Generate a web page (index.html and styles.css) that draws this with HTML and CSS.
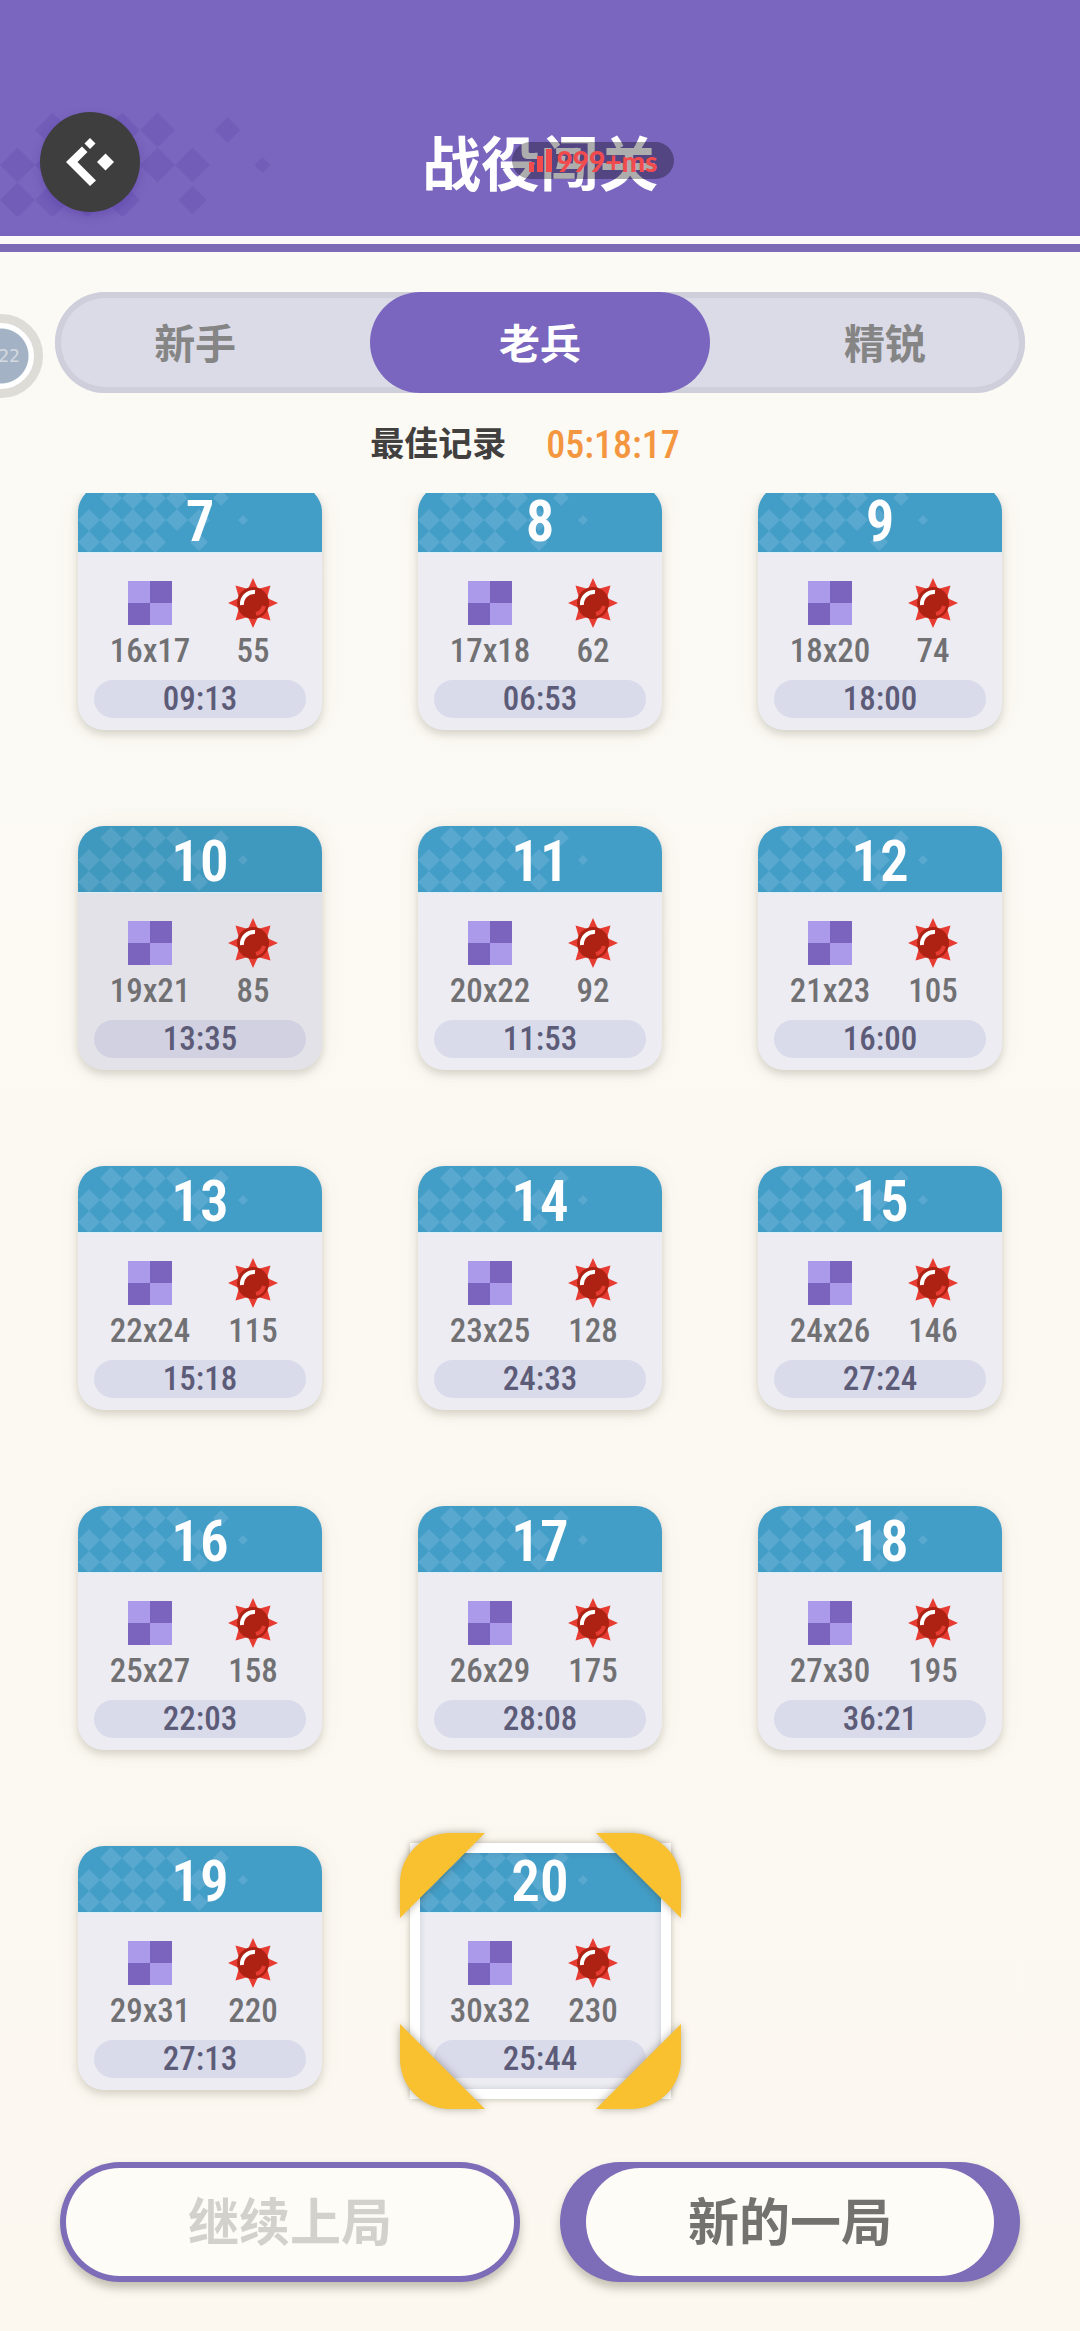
FILE: index.html
```html
<!DOCTYPE html>
<html lang="zh-CN">

<head>
    <meta charset="UTF-8">
    <meta name="viewport" content="width=device-width, initial-scale=1.0">
    <title>战役闯关</title>
    <link rel="stylesheet" href="styles.css">
</head>

<body>
    <!-- shared shapes -->
    <svg class="symbols" aria-hidden="true">
        <symbol id="diamonds" viewBox="0 0 176 66">
            <path d="M33 1l11 11-11 11-11-11zM55 1l11 11-11 11-11-11zM77 1l11 11-11 11-11-11zM99 1l11 11-11 11-11-11zM143 4l8 8-8 8-8-8z" />
            <path d="M11 23l11 11-11 11-11-11zM33 23l11 11-11 11-11-11zM55 23l11 11-11 11-11-11zM77 23l11 11-11 11-11-11zM99 23l11 11-11 11-11-11zM121 23l11 11-11 11-11-11zM165 29l5 5-5 5-5-5z" />
            <path d="M11 45l11 11-11 11-11-11zM33 45l11 11-11 11-11-11zM55 45l11 11-11 11-11-11zM77 45l11 11-11 11-11-11zM121 47l9 9-9 9-9-9z" />
        </symbol>
        <symbol id="board" viewBox="0 0 44 44">
            <path fill="#ab9ae9" d="M0 0h44v44H0z" />
            <path fill="#7a64be" d="M22 0h22v22H22zM0 22h22v22H0z" />
        </symbol>
        <symbol id="mine" viewBox="-26 -26 52 52">
            <path fill="#e63c32" d="M0-25L5-14 17.500-17.500 14-5 25 0 14 5 17.500 17.500 5 14 0 25-5 14-17.500 17.500-14 5-25 0-14-5-17.500-17.500-5-14z" />
            <circle r="16" fill="#ad2212" />
            <path fill="none" stroke="#fff" stroke-width="4" d="M-11 2A12 12 0 0 1 2-11" />
            <path fill="none" stroke="#e63c32" stroke-width="4" d="M11 3A11 11 0 0 1 3 11" />
        </symbol>
    </svg>

    <header class="header">
        <svg class="header-pattern" aria-hidden="true"><use href="#diamonds" /></svg>
        <button class="back" aria-label="返回">
            <svg viewBox="0 0 50 50" aria-hidden="true">
                <path d="M17 9.500L22.500 15 12.500 25 31 43.500 25 49 1 25z" />
                <path d="M25 1l5.500 5.500L25 12l-5.500-5.500z" />
                <path d="M40.500 16.500l8.500 8.500-8.500 8.500-8.500-8.500z" />
            </svg>
        </button>
        <h1 class="title">战役闯关</h1>
        <div class="ping">
            <svg class="ping-bars" viewBox="0 0 24 24" aria-hidden="true">
                <path d="M0 13h5v10H0zM8 7h6v16H8zM17 0h6v23h-6z" />
            </svg>
            <span>999+ms</span>
        </div>
    </header>

    <div class="float-ball">22</div>

    <nav class="tabs">
        <button class="tab">新手</button>
        <button class="tab active">老兵</button>
        <button class="tab">精锐</button>
    </nav>

    <p class="record">
        <span class="record-label">最佳记录</span>
        <span class="record-time">05:18:17</span>
    </p>

    <main class="list">
        <div class="grid" id="grid"></div>
    </main>

    <footer class="actions">
        <button class="action" disabled><span>继续上局</span></button>
        <button class="action primary"><span>新的一局</span></button>
    </footer>

    <script src="script.js"></script>
</body>

</html>
```
FILE: script.js
```js
const levels = [
    [7, '16x17', 55, '09:13'],
    [8, '17x18', 62, '06:53'],
    [9, '18x20', 74, '18:00'],
    [10, '19x21', 85, '13:35', 'pressed'],
    [11, '20x22', 92, '11:53'],
    [12, '21x23', 105, '16:00'],
    [13, '22x24', 115, '15:18'],
    [14, '23x25', 128, '24:33'],
    [15, '24x26', 146, '27:24'],
    [16, '25x27', 158, '22:03'],
    [17, '26x29', 175, '28:08'],
    [18, '27x30', 195, '36:21'],
    [19, '29x31', 220, '27:13'],
    [20, '30x32', 230, '25:44', 'selected']
];

// four gold corners around the selected level
const corners = '<i class="corner tl"></i><i class="corner tr"></i><i class="corner bl"></i><i class="corner br"></i>';

document.getElementById('grid').innerHTML = levels.map(([no, size, mines, time, state = '']) => `
    <button class="level ${state}">
        <span class="level-head">
            <svg class="level-pattern" aria-hidden="true"><use href="#diamonds" /></svg>
            <span class="level-no">${no}</span>
        </span>
        <span class="level-body">
            <span class="stats">
                <span class="stat"><svg class="board" aria-hidden="true"><use href="#board" /></svg>${size}</span>
                <span class="stat"><svg class="mine" aria-hidden="true"><use href="#mine" /></svg>${mines}</span>
            </span>
            <span class="time">${time}</span>
        </span>
        ${state === 'selected' ? corners : ''}
    </button>`).join('');
```
FILE: styles.css
```css
* {
    box-sizing: border-box;
}

body {
    margin: 0;
    min-height: 100vh;
    display: flex;
    flex-direction: column;
    position: relative;
    overflow-x: hidden;
    font-family: "Roboto Condensed", "Liberation Sans Narrow", "Noto Sans CJK SC", sans-serif;
    background: linear-gradient(#fbfaf5, #fcf8f0);
}

button {
    font-family: inherit;
    border: none;
    padding: 0;
    margin: 0;
    cursor: pointer;
}

.symbols {
    position: absolute;
    width: 0;
    height: 0;
}

/* header */
.header {
    position: relative;
    display: flex;
    align-items: center;
    justify-content: center;
    height: 252px;
    padding-top: 92px;
    padding-bottom: 22px;
    background: linear-gradient(#7a66be 0 236px, #fdfbf8 236px 244px, #7d6bb6 244px);
}

.header-pattern {
    position: absolute;
    left: 0;
    top: 111px;
    width: 280px;
    height: 105px;
    fill: #725db9;
}

.back {
    position: absolute;
    left: 40px;
    top: 112px;
    width: 100px;
    height: 100px;
    display: flex;
    align-items: center;
    justify-content: center;
    border-radius: 50%;
    background: #3e3e3e;
    box-shadow: 0 4px 10px rgba(70, 40, 150, 0.3);
}

.back svg {
    width: 50px;
    height: 50px;
    fill: #fff;
}

.title {
    margin: 0;
    font-family: "Noto Sans CJK SC", sans-serif;
    font-size: 59px;
    line-height: 80px;
    color: #fff;
}

.ping {
    position: absolute;
    left: 50%;
    top: 142px;
    margin-left: -28px;
    width: 162px;
    height: 37px;
    display: flex;
    align-items: center;
    justify-content: center;
    gap: 4px;
    border-radius: 19px;
    background: rgba(0, 0, 0, 0.32);
    color: #f24b4e;
    font-family: Lato, sans-serif;
    font-size: 28px;
    font-weight: 900;
}

.ping-bars {
    width: 24px;
    height: 24px;
    fill: #f24b4e;
}

.float-ball {
    position: absolute;
    left: -41px;
    top: 314px;
    width: 84px;
    height: 84px;
    padding-left: 16px;
    border: 9px solid #dedcd7;
    border-radius: 50%;
    background: radial-gradient(circle, #a3b3c5 0 27px, #fff 28px);
    font-family: "DejaVu Sans Mono", monospace;
    font-size: 18px;
    line-height: 66px;
    text-align: center;
    color: #d5dae0;
}

/* tabs */
.tabs {
    display: grid;
    grid-template-columns: 1fr 35% 1fr;
    height: 101px;
    margin: 40px 55px 0;
    border-radius: 51px;
    background: #dbdbe7;
    box-shadow: inset 0 0 0 6px #cfcedb;
}

.tab {
    padding-bottom: 4px;
    font-family: "Noto Sans CJK SC", sans-serif;
    font-size: 41px;
    font-weight: bold;
    color: #858585;
    background: none;
}

.tab:first-child {
    padding-right: 35px;
}

.tab:last-child {
    padding-left: 35px;
}

.tab.active {
    border-radius: 51px;
    background: #7a66be;
    color: #fff;
}

.record {
    display: flex;
    align-items: center;
    justify-content: center;
    gap: 40px;
    height: 60px;
    margin: 22px 0 18px;
    padding-right: 30px;
    line-height: 50px;
}

.record-label {
    padding-bottom: 6px;
    font-family: "Noto Sans CJK SC", sans-serif;
    font-size: 34px;
    font-weight: bold;
    color: #41403e;
}

.record-time {
    font-size: 38px;
    font-weight: 500;
    color: #f3963f;
}

/* levels, scrolled a little past the top of the seventh one */
.list {
    flex: 1;
    overflow: hidden;
}

.grid {
    display: grid;
    grid-template-columns: repeat(3, 1fr);
    gap: 96px;
    margin-top: -7px;
    padding: 0 78px 46px;
}

.level {
    position: relative;
    display: flex;
    flex-direction: column;
    height: 244px;
    border-radius: 26px;
    background: #ececf2;
    box-shadow: 0 4px 8px rgba(90, 80, 60, 0.22), 0 0 24px rgba(120, 100, 60, 0.06);
    color: #717174;
}

.level-head {
    position: relative;
    display: flex;
    align-items: center;
    justify-content: center;
    height: 67px;
    width: 100%;
    border-radius: 26px 26px 0 0;
    border-bottom: 1px solid #d8eff8;
    background: #429dc7;
}

.level-pattern {
    position: absolute;
    left: 0;
    top: 0;
    width: 176px;
    height: 66px;
    fill: #59a8cf;
}

.level-no {
    position: relative;
    padding-top: 6px;
    font-size: 57px;
    line-height: 60px;
    font-weight: 600;
    color: #fff;
}

.level-body {
    width: 100%;
    padding: 23px 16px 12px;
}

.stats {
    display: grid;
    grid-template-columns: 112px 1fr;
    padding-right: 6px;
}

.stat {
    display: flex;
    flex-direction: column;
    align-items: center;
    font-size: 33px;
    line-height: 38px;
    font-weight: 500;
}

.board {
    width: 44px;
    height: 44px;
    margin: 5px 0 7px;
}

.mine {
    width: 52px;
    height: 52px;
    margin: 1px 0 3px;
}

.time {
    display: block;
    height: 38px;
    margin-top: 10px;
    border-radius: 19px;
    background: #d9daea;
    font-size: 33px;
    line-height: 38px;
    font-weight: 500;
    color: #5c5b78;
}

.level.pressed {
    background: #e3e2e8;
}

.pressed .level-head {
    background: #3f98be;
}

.pressed .level-pattern {
    fill: #54a2c5;
}

.pressed .time {
    background: #d2d1e1;
}

.selected::before {
    content: "";
    position: absolute;
    inset: -3px -9px -9px -8px;
    border: 10px solid #fff;
    box-shadow: 0 0 6px rgba(90, 80, 60, 0.35), inset 0 0 6px rgba(80, 80, 120, 0.2);
    z-index: 1;
}

.corner {
    position: absolute;
    width: 85px;
    height: 85px;
    z-index: 2;
    filter: drop-shadow(0 0 4px rgba(60, 50, 30, 0.4));
}

.corner::before {
    content: "";
    display: block;
    height: 100%;
    border-radius: 50px 0 0 0;
    background: #f9c02f;
    clip-path: polygon(0 0, 100% 0, 0 100%);
}

.tl {
    left: -18px;
    top: -13px;
}

.tr {
    right: -19px;
    top: -13px;
    transform: rotate(90deg);
}

.br {
    right: -19px;
    bottom: -19px;
    transform: rotate(180deg);
}

.bl {
    left: -18px;
    bottom: -19px;
    transform: rotate(270deg);
}

/* bottom buttons */
.actions {
    display: grid;
    grid-template-columns: 1fr 1fr;
    gap: 40px;
    padding: 0 60px 49px;
}

.action {
    height: 120px;
    padding: 6px;
    border-radius: 60px;
    background: #7d6cb7;
    box-shadow: 0 6px 10px rgba(90, 80, 60, 0.35);
}

.action span {
    display: flex;
    align-items: center;
    justify-content: center;
    height: 100%;
    padding-bottom: 6px;
    border-radius: 54px;
    background: #fdfcf7;
    font-family: "Noto Sans CJK SC", sans-serif;
    font-size: 51px;
    font-weight: bold;
    color: #73726f;
}

.action.primary {
    padding: 6px 26px;
}

.action:disabled span {
    color: #d2d1cc;
}
```
